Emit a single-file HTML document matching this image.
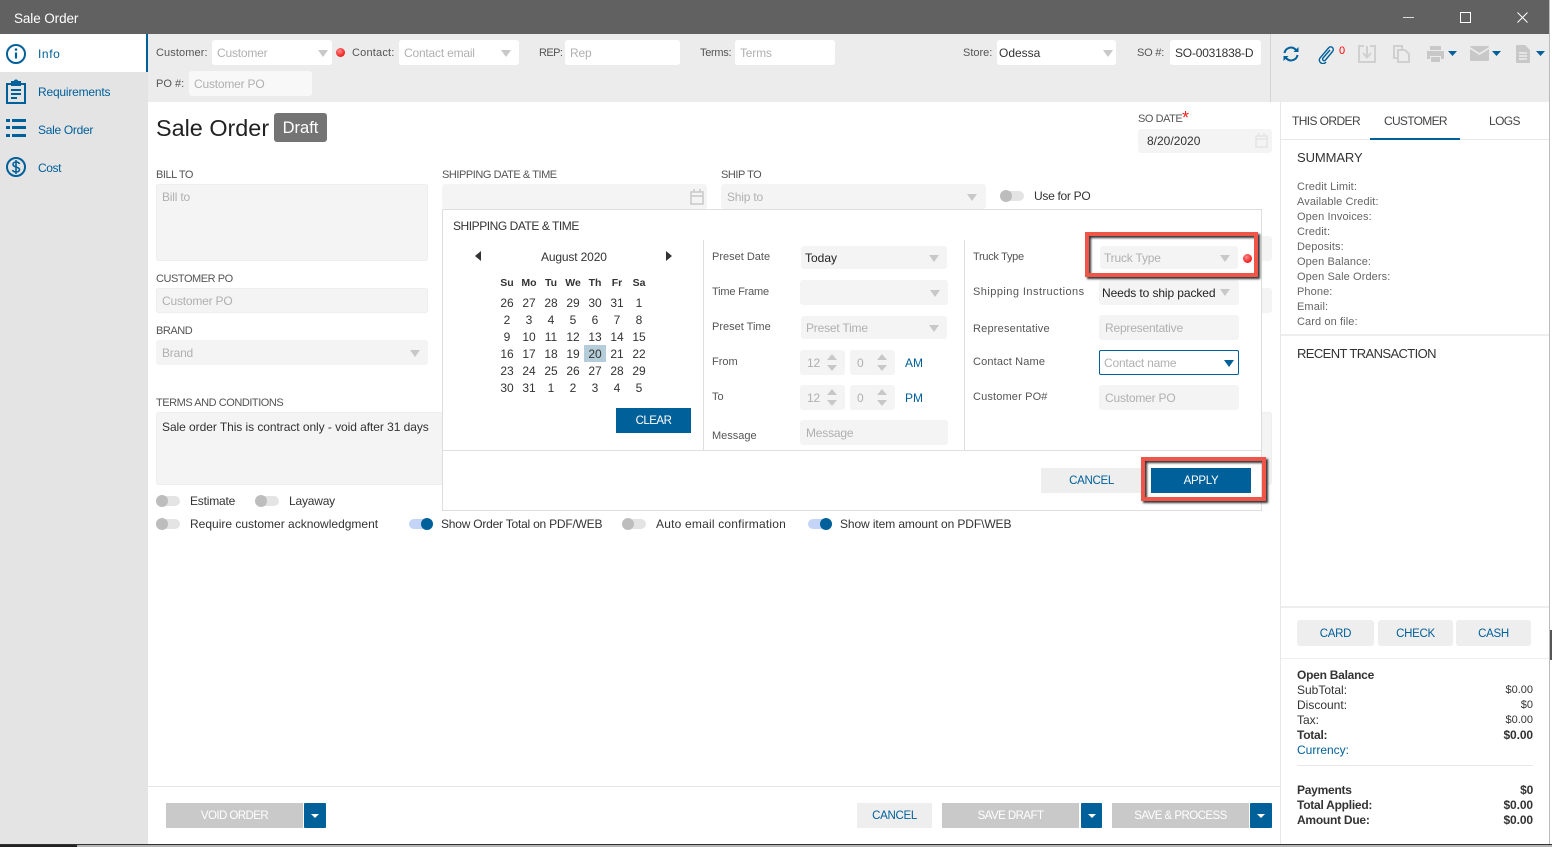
<!DOCTYPE html>
<html><head><meta charset="utf-8"><style>
html,body{margin:0;padding:0;width:1552px;height:847px;overflow:hidden;background:#fff}
body{position:relative;font-family:"Liberation Sans",sans-serif;font-size:12px;color:#333}
div,svg{position:absolute}
.t{white-space:nowrap;line-height:16px;height:16px}
.g{color:#b0b0b0;letter-spacing:-.2px}.b{color:#00609a}.l{color:#555}
.u{color:#555;font-size:11px;letter-spacing:-.45px}
.d{color:#555;font-size:11px}
.f{background:#f4f4f4;border-radius:3px}
.w{background:#fff;border-radius:3px}
.c{text-align:center;width:22px;line-height:16px;height:16px}
.h{font-size:10.5px;font-weight:bold}
.btn{text-align:center;line-height:26px;height:25px;font-size:11.5px;letter-spacing:-.3px}
.dis{background:#c9c9c9;color:#fff;letter-spacing:-.55px}
.drop{background:#00609a;border-radius:1px;height:25px}
.drop:after{content:"";position:absolute;left:50%;top:11px;margin-left:-4px;border:4px solid transparent;border-top:4px solid #fff;border-bottom:0}
.a{width:0;height:0;border-left:5px solid transparent;border-right:5px solid transparent;border-top:7px solid #c8c8c8}
.up{width:0;height:0;border-left:5px solid transparent;border-right:5px solid transparent;border-bottom:6px solid #c8c8c8}
.dn{width:0;height:0;border-left:5px solid transparent;border-right:5px solid transparent;border-top:6px solid #c8c8c8}
.tb{width:24px;height:10px;background:#e4e4e4;border-radius:5px}
.tb:after{content:"";position:absolute;left:0;top:-1px;width:12px;height:12px;border-radius:6px;background:#bdbdbd}
.on{background:#c4d4f7}.on:after{left:12px;background:#00609a}
.red{width:9px;height:9px;border-radius:5px;background:radial-gradient(circle at 40% 35%,#ff8a8a,#ee1c1c 70%)}
.box{border:4px solid #f0554a;box-sizing:border-box;box-shadow:2px 2px 2px #333,inset 2px 2px 2px #333}
.m{font-size:11px}
.bd{font-weight:bold;letter-spacing:-.25px}
.pay{line-height:28px;height:26px;background:#eee;border-radius:3px}
</style></head><body>

<div style="left:0;top:0;width:1550px;height:34px;background:#616161"></div>
<div class="t" style="left:14px;top:11px;color:#fff;font-size:13.5px;letter-spacing:-.1px">Sale Order</div>
<div style="left:1403px;top:17px;width:11px;height:1px;background:#ddd"></div>
<div style="left:1460px;top:12px;width:9px;height:9px;border:1px solid #fff"></div>
<svg style="left:1517px;top:12px" width="11" height="11" viewBox="0 0 11 11"><path d="M.5.5l10 10M10.5.5l-10 10" stroke="#fff" stroke-width="1"/></svg>

<div style="left:0;top:34px;width:148px;height:811px;background:#e4e4e4"></div>
<div style="left:0;top:34px;width:146px;height:38px;background:#fff;border-right:2px solid #00609a"></div>
<svg style="left:5px;top:43px" width="22" height="22" viewBox="0 0 22 22" fill="none" stroke="#00609a"><circle cx="11" cy="11" r="9" stroke-width="2"/><path d="M11 9.500v6" stroke-width="2.200"/><circle cx="11" cy="6.500" r="1.300" fill="#00609a" stroke="none"/></svg>
<svg style="left:5px;top:79px" width="22" height="26" viewBox="0 0 22 26" fill="none" stroke="#00609a" stroke-width="2"><path d="M6 5H2v19h18V5h-4"/><path d="M7 6V3h2.500a1.500 1.500 0 0 1 3 0H15v3z" fill="#00609a"/><path d="M6 11h10M6 15h10M6 19h6"/></svg>
<svg style="left:5px;top:118px" width="22" height="22" viewBox="0 0 22 22" fill="#00609a"><path d="M1 1h4v3H1zM7 1h14v3H7zM1 8h4v3H1zM7 8h14v3H7zM1 16h4v3H1zM7 16h14v3H7z"/></svg>
<svg style="left:5px;top:156px" width="22" height="22" viewBox="0 0 22 22" fill="none" stroke="#00609a" stroke-width="2"><circle cx="11" cy="11" r="9"/><path d="M14.500 8c-.5-1.500-2-2-3.500-2S8 7 8 8.500 9.500 10.500 11 11s3.500 1 3.500 2.500S13 16 11 16s-3-.8-3.500-2M11 4v14" stroke-width="1.600"/></svg>
<div class="t b" style="left:38px;top:46px;letter-spacing:.6px">Info</div>
<div class="t b" style="left:38px;top:84px;letter-spacing:-.2px">Requirements</div>
<div class="t b" style="left:38px;top:122px;letter-spacing:-.3px">Sale Order</div>
<div class="t b" style="left:38px;top:160px;letter-spacing:-.4px">Cost</div>

<div style="left:148px;top:34px;width:1402px;height:68px;background:#ececec"></div>
<div style="left:1270px;top:34px;width:1px;height:68px;background:#d4d4d4"></div>
<div class="t l" style="left:156px;top:45px;font-size:11px;letter-spacing:.1px">Customer:</div>
<div class="w" style="left:212px;top:40px;width:120px;height:25px"></div>
<div class="t g" style="left:217px;top:45px">Customer</div>
<div class="a" style="left:318px;top:50px"></div>
<div class="red" style="left:336px;top:48px"></div>
<div class="t l" style="left:352px;top:45px;font-size:11px;letter-spacing:.2px">Contact:</div>
<div class="w" style="left:399px;top:40px;width:120px;height:25px"></div>
<div class="t g" style="left:404px;top:45px">Contact email</div>
<div class="a" style="left:501px;top:50px"></div>
<div class="t l" style="left:539px;top:45px;font-size:11px;letter-spacing:-.6px">REP:</div>
<div class="w" style="left:565px;top:40px;width:115px;height:25px"></div>
<div class="t g" style="left:570px;top:45px">Rep</div>
<div class="t l" style="left:700px;top:45px;font-size:11px;letter-spacing:-.3px">Terms:</div>
<div class="w" style="left:735px;top:40px;width:100px;height:25px"></div>
<div class="t g" style="left:740px;top:45px">Terms</div>
<div class="t l" style="left:963px;top:45px;font-size:11px">Store:</div>
<div class="w" style="left:997px;top:40px;width:119px;height:25px"></div>
<div class="t" style="left:999px;top:45px">Odessa</div>
<div class="a" style="left:1103px;top:50px"></div>
<div class="t l" style="left:1137px;top:45px;font-size:11px;letter-spacing:-.2px">SO #:</div>
<div class="w" style="left:1170px;top:40px;width:91px;height:25px"></div>
<div class="t" style="left:1175px;top:45px;letter-spacing:-.2px">SO-0031838-D</div>
<div class="t l" style="left:156px;top:76px;font-size:11px">PO #:</div>
<div style="left:189px;top:71px;width:123px;height:25px;background:#f8f8f8;border-radius:3px"></div>
<div class="t g" style="left:194px;top:76px">Customer PO</div>

<svg style="left:1282px;top:45px" width="18" height="18" viewBox="0 0 18 18" fill="none" stroke="#00609a" stroke-width="2"><path d="M2.500 8a6.500 6.500 0 0 1 11-3.500L15 6"/><path d="M15.500 10a6.500 6.500 0 0 1-11 3.500L3 12"/><path d="M16.500 2v5h-5z" fill="#00609a" stroke="none"/><path d="M1.500 16v-5h5z" fill="#00609a" stroke="none"/></svg>
<svg style="left:1316px;top:44px" width="20" height="20" viewBox="0 0 20 20" fill="none" stroke="#00609a" stroke-width="1.400"><path d="M14 6l-7 8c-1.500 2 1 3.500 2.500 2l7-8.500c2.500-3-1.500-6.500-4-3.500l-8.500 10c-2.500 3.500 2.500 8 6 4"/></svg>
<div class="t" style="left:1339px;top:43px;color:#f00;font-size:11px">0</div>
<svg style="left:1358px;top:45px" width="18" height="18" viewBox="0 0 18 18" fill="none" stroke="#d0d0d0" stroke-width="2"><path d="M6 1H1v16h16V1h-5"/><path d="M9 1v11M5 8l4 4.500L13 8"/></svg>
<svg style="left:1393px;top:45px" width="17" height="18" viewBox="0 0 17 18" fill="none" stroke="#d0d0d0" stroke-width="2"><path d="M5 13H1V1h8v3"/><path d="M5 5h7l4 4v8H5z"/></svg>
<svg style="left:1426px;top:45px" width="19" height="18" viewBox="0 0 19 18" fill="#c8c8c8"><path d="M4 1h11v4H4zM1 6h17v8h-3v-3H4v3H1zM5 12h9v5H5z"/></svg>
<svg style="left:1448px;top:51px" width="9" height="5" viewBox="0 0 9 5" fill="#00609a"><path d="M0 0h9L4.500 5z"/></svg>
<svg style="left:1470px;top:46px" width="19" height="15" viewBox="0 0 19 15" fill="#c8c8c8"><path d="M1 0h17q1 0 1 1L9.500 7 0 1q0-1 1-1zM0 3l9.500 6L19 3v11q0 1-1 1H1q-1 0-1-1z"/></svg>
<svg style="left:1492px;top:51px" width="9" height="5" viewBox="0 0 9 5" fill="#00609a"><path d="M0 0h9L4.500 5z"/></svg>
<svg style="left:1516px;top:45px" width="15" height="18" viewBox="0 0 15 18" fill="#c8c8c8"><path d="M1 0h8l5 5v12q0 1-1 1H1q-1 0-1-1V1q0-1 1-1z"/><path d="M3 8h8M3 11h8M3 14h8" stroke="#fff"/></svg>
<svg style="left:1536px;top:51px" width="9" height="5" viewBox="0 0 9 5" fill="#00609a"><path d="M0 0h9L4.500 5z"/></svg>

<div class="t" style="left:156px;top:113px;font-size:23.4px;line-height:30px;height:30px;color:#222">Sale Order</div>
<div style="left:274px;top:113px;width:53px;height:29px;background:#747474;border-radius:3px;color:#fff;text-align:center;line-height:30px;font-size:16.500px">Draft</div>
<div class="t u" style="left:1138px;top:111px">SO DATE</div>
<div class="t" style="left:1182px;top:110px;color:#e22;font-size:18px">*</div>
<div class="f" style="left:1138px;top:129px;width:134px;height:24px"></div>
<div class="t" style="left:1147px;top:133px">8/20/2020</div>
<svg style="left:1255px;top:133px" width="13" height="15" viewBox="0 0 13 15" fill="none" stroke="#e4e4e4" stroke-width="1.500"><rect x="1" y="3" width="11" height="11"/><path d="M1 6h11M4 0v3M9 0v3"/></svg>

<div class="t u" style="left:156px;top:167px">BILL TO</div>
<div class="f" style="left:156px;top:184px;width:272px;height:77px;box-shadow:inset 0 0 0 1px #eee"></div>
<div class="t g" style="left:162px;top:189px">Bill to</div>
<div class="t u" style="left:442px;top:167px">SHIPPING DATE &amp; TIME</div>
<div class="f" style="left:442px;top:184px;width:265px;height:25px"></div>
<svg style="left:690px;top:189px" width="14" height="16" viewBox="0 0 14 16" fill="none" stroke="#c8c8c8" stroke-width="1.500"><rect x="1" y="3" width="12" height="12"/><path d="M1 7h12M4 0v3M10 0v3"/></svg>
<div class="t u" style="left:721px;top:167px">SHIP TO</div>
<div class="f" style="left:721px;top:184px;width:265px;height:25px"></div>
<div class="t g" style="left:727px;top:189px">Ship to</div>
<div class="a" style="left:967px;top:194px"></div>
<div class="tb" style="left:1000px;top:191px"></div>
<div class="t" style="left:1034px;top:188px;letter-spacing:-.3px">Use for PO</div>

<div class="t u" style="left:156px;top:271px">CUSTOMER PO</div>
<div class="f" style="left:156px;top:288px;width:272px;height:25px;box-shadow:inset 0 0 0 1px #eee"></div>
<div class="t g" style="left:162px;top:293px">Customer PO</div>
<div class="t u" style="left:156px;top:323px">BRAND</div>
<div class="f" style="left:156px;top:340px;width:272px;height:25px"></div>
<div class="t g" style="left:162px;top:345px">Brand</div>
<div class="a" style="left:410px;top:350px"></div>
<div class="t u" style="left:156px;top:395px">TERMS AND CONDITIONS</div>
<div class="f" style="left:156px;top:412px;width:1116px;height:73px;box-shadow:inset 0 0 0 1px #eee"></div>
<div class="t" style="left:162px;top:419px;color:#333;letter-spacing:-.06px">Sale order This is contract only - void after 31 days</div>
<div class="f" style="left:1240px;top:236px;width:32px;height:25px"></div>
<div class="f" style="left:1240px;top:288px;width:32px;height:25px"></div>

<div class="tb" style="left:156px;top:496px"></div>
<div class="t" style="left:190px;top:493px;letter-spacing:-.2px">Estimate</div>
<div class="tb" style="left:255px;top:496px"></div>
<div class="t" style="left:289px;top:493px;letter-spacing:-.2px">Layaway</div>
<div class="tb" style="left:156px;top:519px"></div>
<div class="t" style="left:190px;top:516px">Require customer acknowledgment</div>
<div class="tb on" style="left:409px;top:519px"></div>
<div class="t" style="left:441px;top:516px;letter-spacing:-.22px">Show Order Total on PDF/WEB</div>
<div class="tb" style="left:622px;top:519px"></div>
<div class="t" style="left:656px;top:516px;letter-spacing:.2px">Auto email confirmation</div>
<div class="tb on" style="left:808px;top:519px"></div>
<div class="t" style="left:840px;top:516px;letter-spacing:-.1px">Show item amount on PDF\WEB</div>

<!-- dialog -->
<div style="left:442px;top:209px;width:818px;height:300px;background:#fff;border:1px solid #dedede"></div>
<div style="left:703px;top:240px;width:1px;height:210px;background:#dedede"></div>
<div style="left:964px;top:240px;width:1px;height:210px;background:#dedede"></div>
<div style="left:443px;top:450px;width:818px;height:1px;background:#dedede"></div>
<div class="t" style="left:453px;top:218px;color:#333;letter-spacing:-.45px">SHIPPING DATE &amp; TIME</div>
<div style="left:475px;top:251px;border:5px solid transparent;border-right:6px solid #333;border-left:0"></div>
<div style="left:666px;top:251px;border:5px solid transparent;border-left:6px solid #333;border-right:0"></div>
<div class="t" style="left:541px;top:249px;color:#333;letter-spacing:-.15px">August 2020</div>

<div class="c h" style="left:496px;top:275px">Su</div><div class="c h" style="left:518px;top:275px">Mo</div><div class="c h" style="left:540px;top:275px">Tu</div><div class="c h" style="left:562px;top:275px">We</div><div class="c h" style="left:584px;top:275px">Th</div><div class="c h" style="left:606px;top:275px">Fr</div><div class="c h" style="left:628px;top:275px">Sa</div>
<div style="left:584px;top:345px;width:22px;height:17px;background:#b5cdd8"></div>
<div class="c" style="left:496px;top:295px">26</div><div class="c" style="left:518px;top:295px">27</div><div class="c" style="left:540px;top:295px">28</div><div class="c" style="left:562px;top:295px">29</div><div class="c" style="left:584px;top:295px">30</div><div class="c" style="left:606px;top:295px">31</div><div class="c" style="left:628px;top:295px">1</div>
<div class="c" style="left:496px;top:312px">2</div><div class="c" style="left:518px;top:312px">3</div><div class="c" style="left:540px;top:312px">4</div><div class="c" style="left:562px;top:312px">5</div><div class="c" style="left:584px;top:312px">6</div><div class="c" style="left:606px;top:312px">7</div><div class="c" style="left:628px;top:312px">8</div>
<div class="c" style="left:496px;top:329px">9</div><div class="c" style="left:518px;top:329px">10</div><div class="c" style="left:540px;top:329px">11</div><div class="c" style="left:562px;top:329px">12</div><div class="c" style="left:584px;top:329px">13</div><div class="c" style="left:606px;top:329px">14</div><div class="c" style="left:628px;top:329px">15</div>
<div class="c" style="left:496px;top:346px">16</div><div class="c" style="left:518px;top:346px">17</div><div class="c" style="left:540px;top:346px">18</div><div class="c" style="left:562px;top:346px">19</div><div class="c" style="left:584px;top:346px">20</div><div class="c" style="left:606px;top:346px">21</div><div class="c" style="left:628px;top:346px">22</div>
<div class="c" style="left:496px;top:363px">23</div><div class="c" style="left:518px;top:363px">24</div><div class="c" style="left:540px;top:363px">25</div><div class="c" style="left:562px;top:363px">26</div><div class="c" style="left:584px;top:363px">27</div><div class="c" style="left:606px;top:363px">28</div><div class="c" style="left:628px;top:363px">29</div>
<div class="c" style="left:496px;top:380px">30</div><div class="c" style="left:518px;top:380px">31</div><div class="c" style="left:540px;top:380px">1</div><div class="c" style="left:562px;top:380px">2</div><div class="c" style="left:584px;top:380px">3</div><div class="c" style="left:606px;top:380px">4</div><div class="c" style="left:628px;top:380px">5</div>
<div class="btn" style="left:616px;top:408px;width:75px;background:#00609a;color:#fff;letter-spacing:-.5px">CLEAR</div>

<div class="t d" style="left:712px;top:249px">Preset Date</div>
<div class="f" style="left:801px;top:246px;width:146px;height:23px"></div>
<div class="t" style="left:805px;top:250px;color:#222">Today</div>
<div class="a" style="left:929px;top:255px"></div>
<div class="t d" style="left:712px;top:284px;letter-spacing:-.2px">Time Frame</div>
<div class="f" style="left:800px;top:280px;width:148px;height:25px"></div>
<div class="a" style="left:930px;top:290px"></div>
<div class="t d" style="left:712px;top:319px">Preset Time</div>
<div class="f" style="left:801px;top:316px;width:146px;height:23px"></div>
<div class="t g" style="left:806px;top:320px">Preset Time</div>
<div class="a" style="left:929px;top:325px"></div>
<div class="t d" style="left:712px;top:354px">From</div>
<div class="f" style="left:800px;top:350px;width:45px;height:25px"></div>
<div class="t g" style="left:807px;top:355px">12</div>
<div class="up" style="left:827px;top:354px"></div><div class="dn" style="left:827px;top:365px"></div>
<div class="f" style="left:850px;top:350px;width:45px;height:25px"></div>
<div class="t g" style="left:857px;top:355px">0</div>
<div class="up" style="left:877px;top:354px"></div><div class="dn" style="left:877px;top:365px"></div>
<div class="t b" style="left:905px;top:355px">AM</div>
<div class="t d" style="left:712px;top:389px">To</div>
<div class="f" style="left:800px;top:385px;width:45px;height:25px"></div>
<div class="t g" style="left:807px;top:390px">12</div>
<div class="up" style="left:827px;top:389px"></div><div class="dn" style="left:827px;top:400px"></div>
<div class="f" style="left:850px;top:385px;width:45px;height:25px"></div>
<div class="t g" style="left:857px;top:390px">0</div>
<div class="up" style="left:877px;top:389px"></div><div class="dn" style="left:877px;top:400px"></div>
<div class="t b" style="left:905px;top:390px">PM</div>
<div class="t d" style="left:712px;top:428px">Message</div>
<div class="f" style="left:800px;top:420px;width:148px;height:25px"></div>
<div class="t g" style="left:806px;top:425px">Message</div>

<div class="t d" style="left:973px;top:249px;letter-spacing:-.3px">Truck Type</div>
<div class="f" style="left:1100px;top:246px;width:138px;height:23px"></div>
<div class="t g" style="left:1104px;top:250px">Truck Type</div>
<div class="a" style="left:1220px;top:255px"></div>
<div class="red" style="left:1243px;top:254px"></div>
<div class="t d" style="left:973px;top:284px;letter-spacing:.45px">Shipping Instructions</div>
<div class="f" style="left:1099px;top:280px;width:140px;height:25px"></div>
<div class="t" style="left:1102px;top:285px;color:#222;letter-spacing:-.1px">Needs to ship packed</div>
<div class="a" style="left:1220px;top:289px"></div>
<div class="t d" style="left:973px;top:321px;letter-spacing:.2px">Representative</div>
<div class="f" style="left:1099px;top:315px;width:140px;height:25px"></div>
<div class="t g" style="left:1105px;top:320px">Representative</div>
<div class="t d" style="left:973px;top:354px;letter-spacing:.15px">Contact Name</div>
<div style="left:1099px;top:350px;width:138px;height:23px;border:1px solid #00609a;border-radius:2px;background:#fff"></div>
<div class="t g" style="left:1104px;top:355px">Contact name</div>
<div class="a" style="left:1224px;top:360px;border-top-color:#00609a"></div>
<div class="t d" style="left:973px;top:389px;letter-spacing:.15px">Customer PO#</div>
<div class="f" style="left:1099px;top:385px;width:140px;height:25px"></div>
<div class="t g" style="left:1105px;top:390px">Customer PO</div>

<div class="btn b" style="left:1041px;top:468px;width:101px;background:#eee">CANCEL</div>
<div class="btn" style="left:1151px;top:468px;width:100px;background:#00609a;color:#fff">APPLY</div>
<div class="box" style="left:1085px;top:232px;width:173px;height:45px"></div>
<div class="box" style="left:1141px;top:457px;width:125px;height:44px"></div>

<!-- footer -->
<div style="left:148px;top:786px;width:1132px;height:1px;background:#e6e6e6"></div>
<div class="btn dis" style="left:166px;top:803px;width:137px">VOID ORDER</div>
<div class="drop" style="left:304px;top:803px;width:22px"></div>
<div class="btn b" style="left:857px;top:803px;width:75px;background:#eee">CANCEL</div>
<div class="btn dis" style="left:942px;top:803px;width:137px">SAVE DRAFT</div>
<div class="drop" style="left:1081px;top:803px;width:21px"></div>
<div class="btn dis" style="left:1112px;top:803px;width:137px">SAVE &amp; PROCESS</div>
<div class="drop" style="left:1250px;top:803px;width:22px"></div>

<!-- right panel -->
<div style="left:1280px;top:102px;width:1px;height:742px;background:#e8e8e8"></div>
<div class="t" style="left:1292px;top:113px;color:#444;letter-spacing:-.6px">THIS ORDER</div>
<div class="t" style="left:1384px;top:113px;color:#444;letter-spacing:-.7px">CUSTOMER</div>
<div class="t" style="left:1489px;top:113px;color:#444;letter-spacing:-.6px">LOGS</div>
<div style="left:1281px;top:139px;width:269px;height:1px;background:#e8e8e8"></div>
<div style="left:1370px;top:138px;width:90px;height:2px;background:#00609a"></div>
<div class="t" style="left:1297px;top:150px;font-size:13px;color:#333;letter-spacing:-.1px">SUMMARY</div>
<div class="t" style="left:1297px;top:180px;font-size:11px;color:#666;line-height:15px;height:150px;letter-spacing:.1px">Credit Limit:<br>Available Credit:<br>Open Invoices:<br>Credit:<br>Deposits:<br>Open Balance:<br>Open Sale Orders:<br>Phone:<br>Email:<br>Card on file:</div>
<div style="left:1281px;top:334px;width:269px;height:2px;background:#eee"></div>
<div class="t" style="left:1297px;top:346px;font-size:13px;color:#333;letter-spacing:-.6px">RECENT TRANSACTION</div>
<div style="left:1281px;top:606px;width:269px;height:2px;background:#eee"></div>
<div class="btn b pay" style="left:1297px;top:620px;width:77px">CARD</div>
<div class="btn b pay" style="left:1378px;top:620px;width:75px">CHECK</div>
<div class="btn b pay" style="left:1456px;top:620px;width:75px">CASH</div>
<div style="left:1281px;top:658px;width:269px;height:1px;background:#eee"></div>
<div class="t bd" style="left:1297px;top:667px;color:#333">Open Balance</div>
<div class="t" style="left:1297px;top:682px">SubTotal:</div><div class="t m" style="right:19px;top:682px">$0.00</div>
<div class="t" style="left:1297px;top:697px">Discount:</div><div class="t m" style="right:19px;top:697px">$0</div>
<div class="t" style="left:1297px;top:712px">Tax:</div><div class="t m" style="right:19px;top:712px">$0.00</div>
<div class="t bd" style="left:1297px;top:727px">Total:</div><div class="t bd" style="right:19px;top:727px;letter-spacing:-.1px">$0.00</div>
<div class="t b" style="left:1297px;top:742px">Currency:</div>
<div style="left:1297px;top:765px;width:236px;height:1px;background:#e8e8e8"></div>
<div class="t bd" style="left:1297px;top:782px">Payments</div><div class="t bd" style="right:19px;top:782px">$0</div>
<div class="t bd" style="left:1297px;top:797px">Total Applied:</div><div class="t bd" style="right:19px;top:797px;letter-spacing:-.1px">$0.00</div>
<div class="t bd" style="left:1297px;top:812px">Amount Due:</div><div class="t bd" style="right:19px;top:812px;letter-spacing:-.1px">$0.00</div>

<!-- window edges -->
<div style="left:1549px;top:0;width:1px;height:845px;background:#bbb"></div>
<div style="left:1550px;top:630px;width:2px;height:30px;background:#555"></div>
<div style="left:0;top:844px;width:1552px;height:1px;background:#333"></div>
<div style="left:0;top:845px;width:1552px;height:2px;background:#b5b5b5"></div>
<div style="left:0;top:845px;width:77px;height:2px;background:#222"></div>
</body></html>
